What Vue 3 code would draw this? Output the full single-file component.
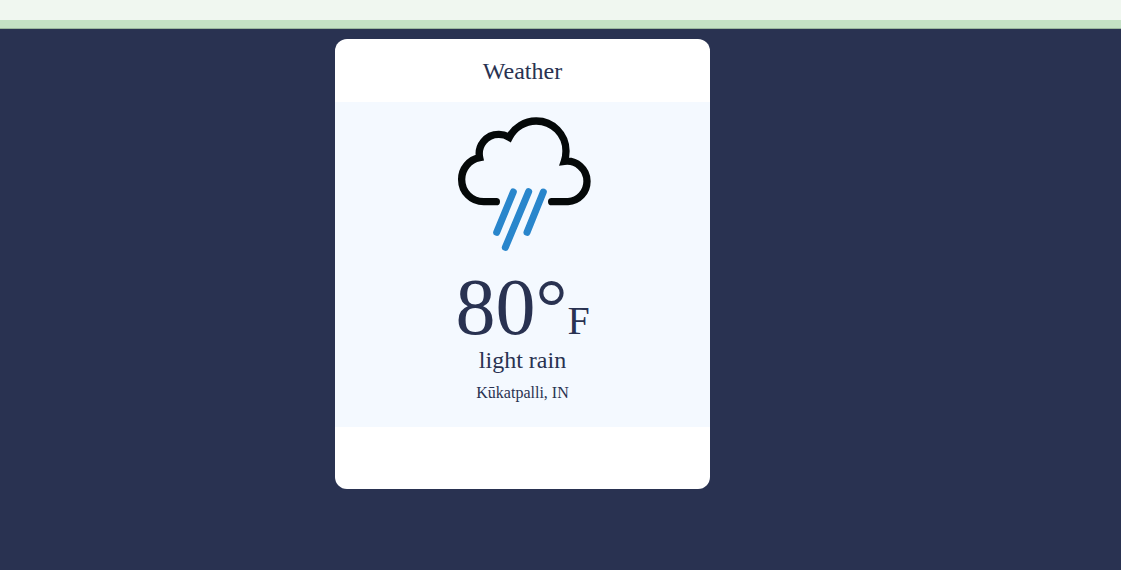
<script setup>
const weather = {
  temperature: 80,
  description: 'light rain',
  location: 'Kūkatpalli, IN',
}
</script>

<template>
  <div class="page">
    <header class="topbar"></header>
    <main class="content">
      <section class="card">
        <h1 class="title">Weather</h1>
        <div class="report">
          <svg class="icon" viewBox="21 -9 453 474" role="img" aria-label="Rain cloud">
            <g fill="none" stroke-linecap="round">
              <path
                class="cloud"
                d="M169 290 H131 A66 66 0 0 1 65 224 A66 66 0 0 1 119 158 A58 58 0 0 1 176 88 A58 58 0 0 1 208 97 A90 90 0 0 1 289 48 A89 90 0 0 1 378 138 Q378 154 373 169 A60 60 0 0 1 441 229 A60 61 0 0 1 384 290 H335"
              />
              <path class="rain" d="M220 261 L170 382 M266 260 L196 427 M310 261 L261 382" />
            </g>
          </svg>
          <p class="temperature">{{ weather.temperature }}°<span class="unit">F</span></p>
          <p class="description">{{ weather.description }}</p>
          <p class="location">{{ weather.location }}</p>
        </div>
      </section>
    </main>
  </div>
</template>

<style>
body {
  margin: 0;
  background: #293251;
}
</style>

<style scoped>
.page {
  display: flex;
  flex-direction: column;
  min-height: 100vh;
  color: #293251;
  font-family: "Liberation Serif", "Times New Roman", serif;
}

.topbar {
  height: 20px;
  background: #f0f7f0;
  border-bottom: 8px solid #c4e1c5;
  box-shadow: 0 1px 0 #9ab69e;
}

.content {
  display: flex;
  justify-content: center;
  padding: 11px 76px 11px 0;
}

.card {
  width: 375px;
  padding-bottom: 62px;
  border-radius: 12px;
  background: #fff;
  overflow: hidden;
}

.title {
  margin: 0;
  padding: 19px 0 17px;
  font-size: 24px;
  font-weight: 400;
  line-height: 27px;
  text-align: center;
}

.report {
  display: flex;
  flex-direction: column;
  align-items: center;
  padding-bottom: 25px;
  background: #f4f9ff;
}

.icon {
  width: 151px;
  height: 158px;
}

.cloud {
  stroke: #050909;
  stroke-width: 22px;
  stroke-miterlimit: 6;
}

.rain {
  stroke: #2986cc;
  stroke-width: 21px;
}

.temperature,
.description,
.location {
  margin: 0;
}

.temperature {
  padding-top: 8px;
  font-size: 80px;
  line-height: 78px;
}

.unit {
  font-size: 40px;
  line-height: 40px;
}

.description {
  font-size: 24px;
  line-height: 28px;
}

.location {
  padding-top: 10px;
  font-size: 16px;
  line-height: 18px;
}
</style>
